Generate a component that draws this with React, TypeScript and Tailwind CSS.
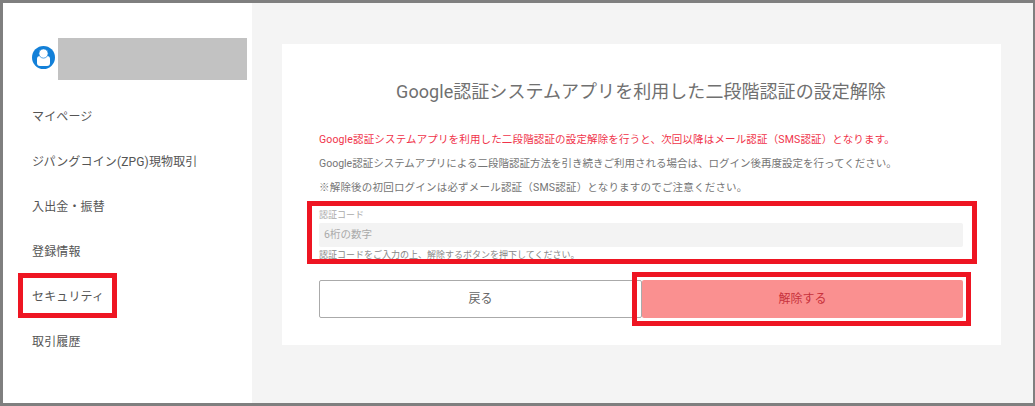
const jp = "font-['Roboto','Noto_Sans_CJK_JP',sans-serif]";

const navItems = ["マイページ", "ジパングコイン(ZPG)現物取引", "入出金・振替", "登録情報", "セキュリティ", "取引履歴"];

function UserIcon() {
  return (
    <svg width="23" height="23" viewBox="0 0 23 23" className="mt-[8px] shrink-0 self-start">
      <circle cx="11.5" cy="11.5" r="11.5" fill="#1380d8" />
      <rect x="5" y="10" width="13" height="10" rx="3" fill="#fff" />
      <circle cx="11.5" cy="7.5" r="4.6" fill="#fff" stroke="#1380d8" strokeWidth="0.7" />
    </svg>
  );
}

function Sidebar() {
  return (
    <aside className="w-[249px] shrink-0 bg-white pt-[35px] pl-[29px] pr-[5px]">
      <div className="flex items-center gap-[3px]">
        <UserIcon />
        <div className="h-[42px] flex-1 bg-[#c2c2c2]" />
      </div>
      <nav className="mt-[14px] flex flex-col">
        {navItems.map((item) => (
          <a key={item} className="flex h-[45px] items-center text-[12px] tracking-[0.15px] text-[#555]">
            {item}
          </a>
        ))}
      </nav>
    </aside>
  );
}

function Card() {
  return (
    <section className="h-[301px] w-[719px] bg-white pl-[37px] pr-[38px] pt-[35px]">
      <h1 className="text-center text-[18px] leading-[26px] tracking-[0.05px] text-[#707070]">
        Google認証システムアプリを利用した二段階認証の設定解除
      </h1>
      <div className="mt-[26px] flex flex-col gap-[6px] text-[10.5px] leading-[18px] text-[#757575]">
        <p className="tracking-[0.15px] text-[#f0334a]">
          Google認証システムアプリを利用した二段階認証の設定解除を行うと、次回以降はメール認証（SMS認証）となります。
        </p>
        <p>Google認証システムアプリによる二段階認証方法を引き続きご利用される場合は、ログイン後再度設定を行ってください。</p>
        <p className="tracking-[0.2px]">※解除後の初回ログインは必ずメール認証（SMS認証）となりますのでご注意ください。</p>
      </div>
      <div className="mt-[11px]">
        <label className="block text-[9px] leading-[14px] text-[#aaa]">認証コード</label>
        <div className="mt-[1px] flex h-[24px] items-center rounded-[2px] bg-[#f3f3f3] px-[5px] text-[10.5px] text-[#aaa]">
          6桁の数字
        </div>
        <p className="mt-[1px] text-[9px] leading-[14px] text-[#888]">
          認証コードをご入力の上、解除するボタンを押下してください。
        </p>
      </div>
      <div className="mt-[18px] flex">
        <button className="h-[38px] flex-1 rounded-[2px] border border-[#aaa] bg-white text-[12px] text-[#666]">
          戻る
        </button>
        <button className="h-[38px] flex-1 rounded-[2px] bg-[#fa9090] text-[12px] text-[#c8323c]">
          解除する
        </button>
      </div>
    </section>
  );
}

export default function App() {
  return (
    <div className={`relative flex h-[406px] w-[1035px] overflow-hidden border-t-[3px] border-r-[2px] border-b-[3px] border-l-[3px] border-[#7f7f7f] bg-[#f4f4f4] ${jp}`}>
      <Sidebar />
      <main className="flex-1 pt-[41px] pl-[30px]">
        <Card />
      </main>
      {/* red callouts drawn over the screenshot */}
      <div className="absolute left-[15px] top-[270px] h-[45px] w-[99px] border-[5px] border-[#ee1522]" />
      <div className="absolute left-[304px] top-[198px] h-[63px] w-[670px] border-[5px] border-[#ee1522]" />
      <div className="absolute left-[629px] top-[269px] h-[54px] w-[339px] border-[5px] border-[#ee1522]" />
    </div>
  );
}
